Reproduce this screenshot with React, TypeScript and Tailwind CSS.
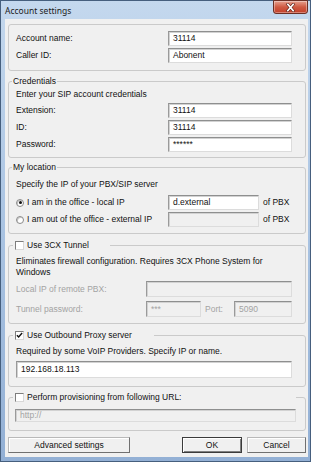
import React from "react";

const ui = "font-['Liberation_Sans',Arial,sans-serif] text-[8.5px] leading-[11px] text-[#111]";

function Input({
    value,
    className,
    disabled = false,
}: {
    value?: string;
    className: string;
    disabled?: boolean;
}) {
    return (
        <div
            className={`flex items-center overflow-hidden pl-[4px] border border-t-[#8e8f8f] border-l-[#9a9a9a] border-r-[#dcdcdc] border-b-[#dcdcdc] shadow-[inset_1px_1px_0_#d2d2d2] ${
                disabled ? "bg-[#f0f0f0] text-[#a3a3a3]" : "bg-white text-[#111]"
            } ${className}`}
        >
            {value}
        </div>
    );
}

function Checkbox({ checked = false }: { checked?: boolean }) {
    return (
        <span className="relative flex h-[9px] w-[9px] shrink-0 items-center justify-center border border-t-[#7d7d7d] border-l-[#7d7d7d] border-r-[#d8d8d8] border-b-[#d8d8d8] bg-white">
            {checked && (
                <svg viewBox="0 0 8 8" className="h-[7px] w-[7px]">
                    <path d="M1 3.8 L3 5.8 L7 1.2" fill="none" stroke="#111" strokeWidth={1.6} />
                </svg>
            )}
        </span>
    );
}

function Radio({ checked = false }: { checked?: boolean }) {
    return (
        <span className="flex h-[8px] w-[8px] shrink-0 items-center justify-center rounded-full border border-[#8a8a8a] bg-white shadow-[inset_1px_1px_0_#c8c8c8]">
            {checked && <span className="h-[3px] w-[3px] rounded-full bg-[#111]" />}
        </span>
    );
}

function Row({ label, children, muted = false }: { label: string; children: React.ReactNode; muted?: boolean }) {
    return (
        <div className="flex items-center">
            <span className={`flex-1 ${muted ? "text-[#a3a3a3]" : ""}`}>{label}</span>
            {children}
        </div>
    );
}

export default function App() {
    return (
        <div className={`${ui} flex h-[462px] w-[311px] flex-col border border-[#465f7e] bg-gradient-to-b from-[#c4d8ee] via-[#a9c3e2] to-[#93b0d5]`}>
            {/* Title bar */}
            <div className="flex h-[18px] shrink-0 items-start">
                <span className="pl-[4px] pt-[4px] font-['Noto_Sans',sans-serif] text-[8.5px] leading-[11px] text-[#1b1b1b]">
                    Account settings
                </span>
                <div className="ml-auto mr-[2px] -mt-px flex h-[14px] w-[35px] items-center justify-center rounded-b-[3px] border border-[#6b2f25] bg-gradient-to-b from-[#e5a08f] via-[#cf5a43] to-[#c23f2a] shadow-[inset_0_0_0_1px_rgba(255,255,255,0.35)]">
                    <svg viewBox="0 0 12 10" className="h-[9px] w-[11px]">
                        <path d="M3 1.5 L9 8.5 M9 1.5 L3 8.5" stroke="#5a2018" strokeWidth={3.2} strokeLinecap="square" />
                        <path d="M3 1.5 L9 8.5 M9 1.5 L3 8.5" stroke="#fff" strokeWidth={1.8} strokeLinecap="square" />
                    </svg>
                </div>
            </div>

            {/* Client area */}
            <div className="ml-[4px] mr-[2px] flex h-[438px] flex-col bg-[#f0f0f0] pl-[3px] pr-[2px]">
                {/* Account */}
                <div className="mt-[5px] h-[47px] w-[298px] rounded-[3px] border border-[#cacaca] pl-[7px] pr-[13px] pt-[6px]">
                    <div className="flex flex-col gap-[2px]">
                        <Row label="Account name:">
                            <Input value="31114" className="h-[15px] w-[124px]" />
                        </Row>
                        <Row label="Caller ID:">
                            <Input value="Abonent" className="h-[15px] w-[124px]" />
                        </Row>
                    </div>
                </div>

                {/* Credentials */}
                <fieldset className="mt-[5px] w-[298px] rounded-[3px] border border-[#cacaca] px-0">
                    <legend className="ml-[3px] px-[1px] leading-[11px]">Credentials</legend>
                    <div className="pl-[7px] pr-[13px] pt-[2px] pb-[5px]">
                        <div>Enter your SIP account credentials</div>
                        <div className="mt-[3px] flex flex-col gap-[2px]">
                            <Row label="Extension:">
                                <Input value="31114" className="h-[15px] w-[124px]" />
                            </Row>
                            <Row label="ID:">
                                <Input value="31114" className="h-[15px] w-[124px]" />
                            </Row>
                            <Row label="Password:">
                                <Input value="******" className="h-[15px] w-[124px]" />
                            </Row>
                        </div>
                    </div>
                </fieldset>

                {/* My location */}
                <fieldset className="mt-[4px] w-[298px] rounded-[3px] border border-[#cacaca] px-0">
                    <legend className="ml-[3px] px-[1px] leading-[11px]">My location</legend>
                    <div className="pl-[7px] pr-[13px] pt-[6px] pb-[6px]">
                        <div>Specify the IP of your PBX/SIP server</div>
                        <div className="mt-[5px] flex flex-col gap-[2px]">
                            <div className="flex items-center">
                                <div className="flex flex-1 items-center gap-[3px]">
                                    <Radio checked />
                                    <span>I am in the office - local IP</span>
                                </div>
                                <Input value="d.external" className="h-[15px] w-[91px]" />
                                <span className="ml-[4px] w-[29px]">of PBX</span>
                            </div>
                            <div className="flex items-center">
                                <div className="flex flex-1 items-center gap-[3px]">
                                    <Radio />
                                    <span>I am out of the office - external IP</span>
                                </div>
                                <Input disabled className="h-[15px] w-[91px]" />
                                <span className="ml-[4px] w-[29px]">of PBX</span>
                            </div>
                        </div>
                    </div>
                </fieldset>

                {/* 3CX Tunnel */}
                <fieldset className="mt-[6px] w-[298px] rounded-[3px] border border-[#cacaca] px-0">
                    <legend className="ml-[4px] flex w-[97px] items-center gap-[3px] pl-[2px] leading-[11px]">
                        <Checkbox />
                        <span>Use 3CX Tunnel</span>
                    </legend>
                    <div className="pl-[7px] pr-[13px] pt-[5px] pb-[6px]">
                        <div>
                            Eliminates firewall configuration. Requires 3CX Phone System for
                            <br />
                            Windows
                        </div>
                        <div className="mt-[3px] flex flex-col gap-[4px]">
                            <Row label="Local IP of remote PBX:" muted>
                                <Input disabled className="h-[16px] w-[146px]" />
                            </Row>
                            <div className="flex items-center">
                                <span className="flex-1 text-[#a3a3a3]">Tunnel password:</span>
                                <Input disabled value="***" className="h-[16px] w-[55px]" />
                                <span className="ml-[4px] w-[29px] text-[#a3a3a3]">Port:</span>
                                <Input disabled value="5090" className="h-[16px] w-[58px]" />
                            </div>
                        </div>
                    </div>
                </fieldset>

                {/* Outbound proxy */}
                <fieldset className="mt-[6px] w-[298px] rounded-[3px] border border-[#cacaca] px-0">
                    <legend className="ml-[4px] flex w-[141px] items-center gap-[3px] pl-[2px] leading-[11px]">
                        <Checkbox checked />
                        <span>Use Outbound Proxy server</span>
                    </legend>
                    <div className="pl-[7px] pr-[13px] pt-[5px] pb-[8px]">
                        <div>Required by some VoIP Providers. Specify IP or name.</div>
                        <Input value="192.168.18.113" className="mt-[4px] h-[17px] w-[276px]" />
                    </div>
                </fieldset>

                {/* Provisioning */}
                <fieldset className="mt-[5px] w-[298px] rounded-[3px] border border-[#cacaca] px-0">
                    <legend className="ml-[4px] flex w-[283px] items-center gap-[3px] pl-[2px] leading-[11px]">
                        <Checkbox />
                        <span>Perform provisioning from following URL:</span>
                    </legend>
                    <div className="pl-[6px] pt-[6px] pb-[8px]">
                        <Input disabled value="http://" className="h-[13px] w-[281px]" />
                    </div>
                </fieldset>

                {/* Buttons */}
                <div className="mt-[6px] flex w-[298px] items-center">
                    <button className="h-[16px] w-[122px] border border-[#b9b9b9] border-r-[#707070] border-b-[#707070] bg-[#f0f0f0] shadow-[inset_1px_1px_0_#fff]">
                        Advanced settings
                    </button>
                    <button className="ml-auto h-[16px] w-[60px] border border-[#3b3b3b] bg-[#f0f0f0] shadow-[inset_1px_1px_0_#fff,inset_-1px_-1px_0_#808080]">
                        OK
                    </button>
                    <button className="ml-[5px] h-[16px] w-[59px] border border-[#b9b9b9] border-r-[#707070] border-b-[#707070] bg-[#f0f0f0] shadow-[inset_1px_1px_0_#fff]">
                        Cancel
                    </button>
                </div>
            </div>
        </div>
    );
}
